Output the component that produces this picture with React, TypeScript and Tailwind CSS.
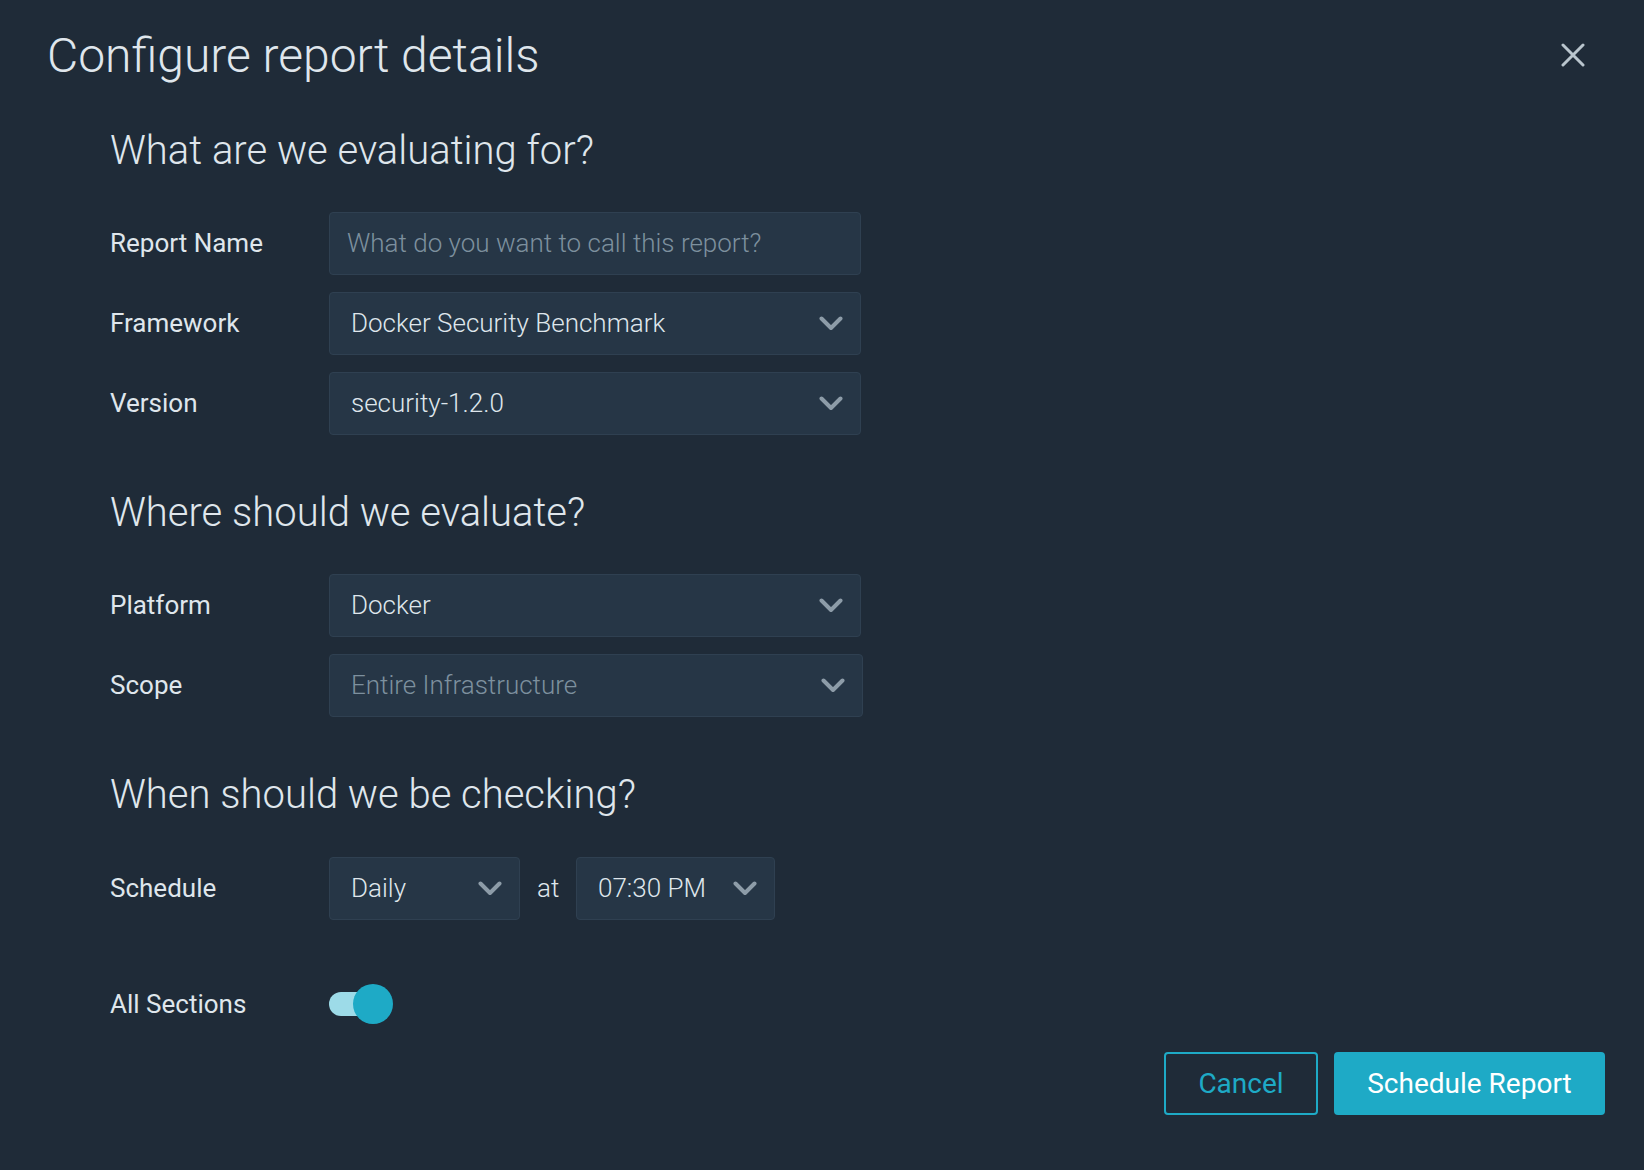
import React from 'react';

const Chevron: React.FC = () => (
  <svg width="24" height="15" viewBox="0 0 24 15" fill="none" className="shrink-0">
    <polyline points="2.5,2.5 12,12 21.5,2.5" stroke="#8d9ca8" strokeWidth="4" strokeLinecap="round" strokeLinejoin="round" />
  </svg>
);

interface SelectProps {
  value: string;
  muted?: boolean;
  className?: string;
}

const SelectBox: React.FC<SelectProps> = ({ value, muted = false, className = 'w-[532px]' }) => (
  <div
    className={`h-[63px] ${className} flex items-center justify-between pl-[21px] pr-[17px] rounded-[4px] bg-[#263646] border border-[#2f4051]`}
  >
    <span className={`text-[26px] font-light ${muted ? 'text-[#7d909e]' : 'text-[#dfe6ec]'}`}>{value}</span>
    <Chevron />
  </div>
);

const Row: React.FC<{ label: string; children: React.ReactNode }> = ({ label, children }) => (
  <div className="flex items-center">
    <div className="w-[219px] text-[26px] text-[#dfe6ec]">{label}</div>
    {children}
  </div>
);

const SectionTitle: React.FC<{ children: React.ReactNode; className?: string }> = ({ children, className = '' }) => (
  <h2 className={`text-[40px] leading-none font-light text-[#dfe6ec] ${className}`}>{children}</h2>
);

export default function App() {
  return (
    <div
      className="w-[1644px] h-[1170px] bg-[#1f2b38] relative overflow-hidden"
      style={{ fontFamily: 'Roboto, "Open Sans", sans-serif' }}
    >
      {/* Header */}
      <div className="flex items-start justify-between pl-[47px] pr-[59px] pt-[32px]">
        <h1 className="text-[48px] leading-none font-light text-[#dfe6ec]">Configure report details</h1>
        <button className="mt-[11px] text-[#b9c5cd]" aria-label="Close">
          <svg width="24" height="24" viewBox="0 0 24 24" fill="none">
            <path d="M2 2 L22 22 M22 2 L2 22" stroke="currentColor" strokeWidth="3" strokeLinecap="round" />
          </svg>
        </button>
      </div>

      <div className="pl-[110px] flex flex-col">
        {/* What */}
        <SectionTitle className="mt-[51px]">What are we evaluating for?</SectionTitle>
        <div className="mt-[41px] flex flex-col gap-[17px]">
          <Row label="Report Name">
            <div className="h-[63px] w-[532px] flex items-center pl-[17px] rounded-[4px] bg-[#263646] border border-[#2f4051]">
              <span className="text-[26px] font-light text-[#7d909e]">What do you want to call this report?</span>
            </div>
          </Row>
          <Row label="Framework">
            <SelectBox value="Docker Security Benchmark" />
          </Row>
          <Row label="Version">
            <SelectBox value="security-1.2.0" />
          </Row>
        </div>

        {/* Where */}
        <SectionTitle className="mt-[58px]">Where should we evaluate?</SectionTitle>
        <div className="mt-[41px] flex flex-col gap-[17px]">
          <Row label="Platform">
            <SelectBox value="Docker" />
          </Row>
          <Row label="Scope">
            <SelectBox value="Entire Infrastructure" muted className="w-[534px]" />
          </Row>
        </div>

        {/* When */}
        <SectionTitle className="mt-[58px]">When should we be checking?</SectionTitle>
        <div className="mt-[42px]">
          <Row label="Schedule">
            <SelectBox value="Daily" className="w-[191px]" />
            <span className="w-[56px] pl-[17px] text-[26px] font-light text-[#dfe6ec]">at</span>
            <SelectBox value="07:30 PM" className="w-[199px] !pl-[21px]" />
          </Row>
        </div>

        <div className="mt-[64px]">
          <Row label="All Sections">
            <div className="relative h-[40px] w-[64px] flex items-center">
              <div className="h-[24px] w-[48px] rounded-full bg-[#9ddbe8]" />
              <div className="absolute left-[24px] top-0 h-[40px] w-[40px] rounded-full bg-[#1eaac6]" />
            </div>
          </Row>
        </div>
      </div>

      {/* Footer buttons */}
      <div className="flex justify-end gap-[16px] pr-[39px] mt-[28px]">
        <button className="h-[63px] w-[154px] rounded-[4px] border-2 border-[#1eaac6] text-[28px] text-[#1eaac6]">
          Cancel
        </button>
        <button className="h-[63px] w-[271px] rounded-[4px] bg-[#1eaac6] text-[28px] text-white">
          Schedule Report
        </button>
      </div>
    </div>
  );
}
